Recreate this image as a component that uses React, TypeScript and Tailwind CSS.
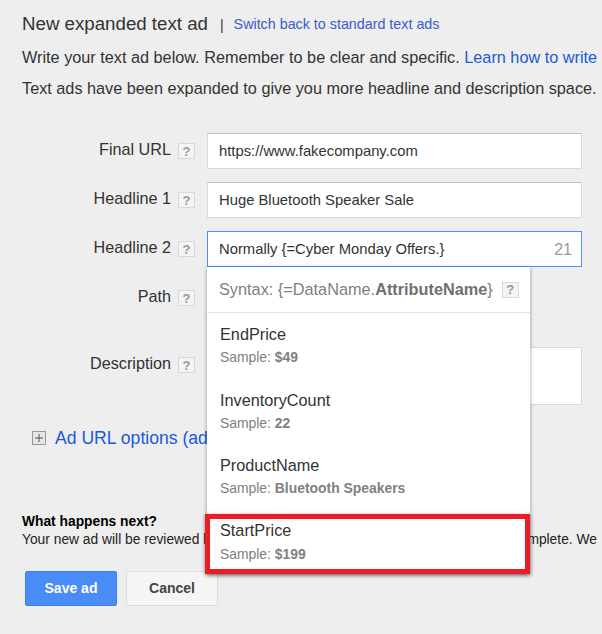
const font = { fontFamily: '"Liberation Sans", Arial, sans-serif' };

function Help() {
  return (
    <span className="flex h-4 w-[17px] shrink-0 items-center justify-center border border-[#d9d9d9] bg-[#f4f4f4] text-[13px] leading-none font-bold text-[#999]">
      ?
    </span>
  );
}

function Row({ label, className, children }: { label: string; className: string; children?: React.ReactNode }) {
  return (
    <div className={"flex " + className}>
      <div className="flex h-9 w-[195px] items-center justify-end gap-[7px]">
        <span className="-mt-[3px] text-[16.2px] text-[#333]">{label}</span>
        <Help />
      </div>
      <div className="ml-[12px]">{children}</div>
    </div>
  );
}

function Field({ value, count, focused }: { value: string; count?: string; focused?: boolean }) {
  return (
    <div
      className={
        "flex h-9 w-[375px] items-center justify-between bg-white pl-[11px] pr-[9px] pt-[1px] text-[14.8px] text-[#333] border " +
        (focused ? "border-[#4d90fe]" : "border-[#d9d9d9] border-t-[#c0c0c0]")
      }
    >
      <span>{value}</span>
      {count && <span className="text-[16px] text-[#999]">{count}</span>}
    </div>
  );
}

const items = [
  { name: "EndPrice", sample: "$49" },
  { name: "InventoryCount", sample: "22" },
  { name: "ProductName", sample: "Bluetooth Speakers" },
];

function Suggestion({ name, sample }: { name: string; sample: string }) {
  return (
    <div className="h-[65.5px] pl-[13px] pt-[10px]">
      <div className="text-[16.25px] leading-[22px] text-[#333]">{name}</div>
      <div className="mt-[2px] text-[13.9px] leading-[20px] text-[#808080]">
        Sample: <b>{sample}</b>
      </div>
    </div>
  );
}

export default function App() {
  return (
    <div className="relative h-[634px] w-[602px] overflow-hidden bg-[#eeeeee] pl-[22px] pt-[11px]" style={font}>
      <div className="flex h-[26px] items-center whitespace-nowrap">
        <h1 className="text-[18.7px] font-normal text-[#333]">New expanded text ad</h1>
        <span className="ml-[12px] mt-[2px] text-[14px] text-[#333]">|</span>
        <a className="ml-[10px] mt-[2px] text-[14.3px] text-[#3b5bcc]">Switch back to standard text ads</a>
      </div>
      <p className="mt-[8px] whitespace-nowrap text-[16.25px] leading-[24px] text-[#333]">
        Write your text ad below. Remember to be clear and specific. <a className="text-[#1a5ad7]">Learn how to write</a>
      </p>
      <p className="mt-[7px] whitespace-nowrap text-[16.25px] leading-[24px] text-[#333]">
        Text ads have been expanded to give you more headline and description space.
      </p>

      <div className="-ml-[22px] mt-[33px]">
        <Row label="Final URL" className="h-[49px]">
          <Field value="https://www.fakecompany.com" />
        </Row>
        <Row label="Headline 1" className="h-[49px]">
          <Field value="Huge Bluetooth Speaker Sale" />
        </Row>
        <Row label="Headline 2" className="h-[49px]">
          <Field value="Normally {=Cyber Monday Offers.}" count="21" focused />
        </Row>
        <Row label="Path" className="h-[67px]" />
        <Row label="Description" className="h-[69px]">
          <div className="h-[58px] w-[375px] border border-[#d9d9d9] bg-white" />
        </Row>
      </div>

      <div className="-ml-[22px] flex items-center pl-[32px] pt-[9px]">
        <span className="flex h-[14px] w-[14px] items-center justify-center border border-[#999] bg-[#e6e6e6]">
          <svg width="10" height="10" viewBox="0 0 10 10">
            <path d="M5 1v8M1 5h8" stroke="#555" strokeWidth="1" />
          </svg>
        </span>
        <a className="ml-[9px] whitespace-nowrap text-[17.6px] text-[#1a5ad7]">Ad URL options (advanced)</a>
      </div>

      <div className="mt-[62px] whitespace-nowrap text-[13.8px] leading-[18px] text-[#222]">
        <div className="font-bold text-black">What happens next?</div>
        <div>Your new ad will be reviewed by Google.{"\u00a0"} The review process is usually quick to complete. We</div>
      </div>

      <div className="ml-[3px] mt-[22px] flex gap-[9px]">
        <button className="h-[35px] w-[92px] rounded-[2px] border border-[#3b82f0] bg-[#4a8cf7] text-[14px] font-bold text-white">
          Save ad
        </button>
        <button className="h-[35px] w-[92px] rounded-[2px] border border-[#dcdcdc] bg-[#f5f5f5] text-[14px] font-bold text-[#444]">
          Cancel
        </button>
      </div>

      {/* autocomplete menu sits over the form */}
      <div className="absolute left-[207px] top-[267px] h-[307px] w-[323px] bg-white shadow-[0_1px_4px_rgba(0,0,0,0.4)]">
        <div className="flex h-[46px] items-center border-b border-[#e5e5e5] pl-[12px] text-[16.3px] text-[#808080]">
          <span>
            Syntax: {"{=DataName."}
            <b className="text-[#707070]">AttributeName</b>
            {"}"}
          </span>
          <span className="ml-[9px]">
            <Help />
          </span>
        </div>
        {items.map((item) => (
          <Suggestion key={item.name} name={item.name} sample={item.sample} />
        ))}
      </div>
      <div className="absolute left-[205px] top-[514px] h-[60px] w-[325px] border-[5px] border-[#ed1c24] bg-white pl-[10px] shadow-[0_1px_4px_rgba(0,0,0,0.4)]">
        <div className="text-[16.25px] leading-[22px] text-[#333]">StartPrice</div>
        <div className="mt-[3px] text-[13.9px] leading-[20px] text-[#808080]">
          Sample: <b>$199</b>
        </div>
      </div>
    </div>
  );
}
